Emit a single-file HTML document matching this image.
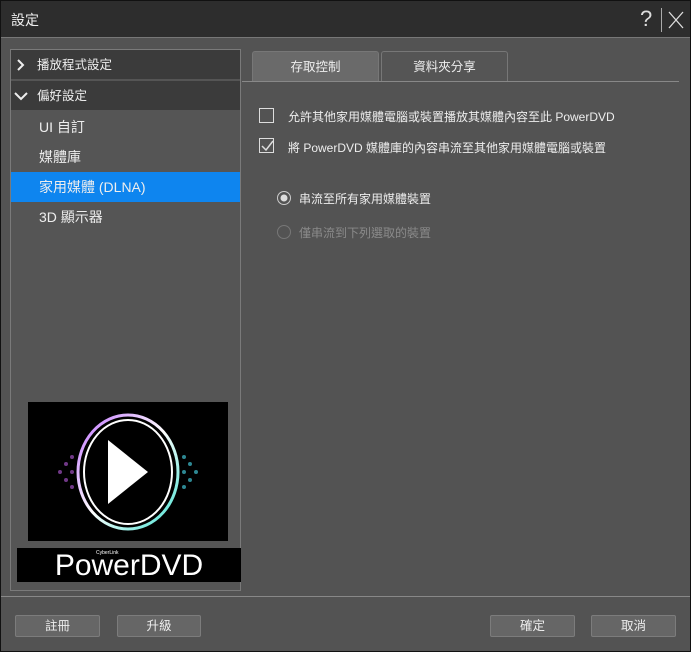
<!DOCTYPE html>
<html><head><meta charset="utf-8"><style>
*{margin:0;padding:0;box-sizing:border-box}
body{width:691px;height:652px;background:#535353;font-family:"Liberation Sans","Noto Sans CJK TC",sans-serif;color:#eee;font-size:13px;position:relative;overflow:hidden}
.abs{position:absolute}
#title{left:0;top:0;width:691px;height:38px;background:#2d2d2d;border-bottom:1px solid #777}
#left{left:10px;top:49px;width:231px;height:542px;border:1px solid #7a7a7a;background:#555}
.hdr{position:absolute;left:0;width:229px;height:30px;background:#3b3b3b;border-bottom:1px solid #555;line-height:30px;padding-left:26px;font-size:12.5px}
.item{position:absolute;left:0;width:229px;height:30px;line-height:30px;padding-left:28px;font-size:14px}
.tab{top:51px;height:31px;line-height:31px;text-align:center;font-size:12.5px;border:1px solid #777;border-bottom:none;border-radius:3px 3px 0 0}
.btn{top:615px;height:22px;line-height:21px;text-align:center;background:#666;border:1px solid #7c7c7c;border-radius:2px;font-size:12.5px}
.cb{width:15px;height:15px;border:1px solid #ddd}
</style></head><body>
<div id="title" class="abs"><span class="abs" style="left:11px;top:10px;font-size:14px">設定</span>
<span class="abs" style="left:640px;top:6px;font-size:22px;color:#ddd;font-weight:300">?</span>
<div class="abs" style="left:661px;top:8px;width:1px;height:24px;background:#aaa"></div>
<svg class="abs" style="left:668px;top:11px" width="16" height="18"><path d="M1 1L15 17M15 1L1 17" stroke="#ddd" stroke-width="1.3"/></svg></div>
<div id="left" class="abs">
<div class="hdr" style="top:0">播放程式設定</div>
<svg class="abs" style="left:5px;top:9px" width="10" height="12"><path d="M2 1L7 6L2 11" stroke="#eee" stroke-width="2" fill="none"/></svg>
<div class="hdr" style="top:31px">偏好設定</div>
<svg class="abs" style="left:3px;top:41px" width="14" height="10"><path d="M1 2L7 8L13 2" stroke="#eee" stroke-width="2" fill="none"/></svg>
<div class="item" style="top:62px">UI 自訂</div>
<div class="item" style="top:92px">媒體庫</div>
<div class="item" style="top:122px;background:#0e85ef">家用媒體 (DLNA)</div>
<div class="item" style="top:152px">3D 顯示器</div>
<div class="abs" style="left:17px;top:352px;width:200px;height:139px;background:#000">
<svg width="200" height="139"><defs><linearGradient id="g" x1="0" y1="0" x2="1" y2="1"><stop offset="0" stop-color="#c070ff"/><stop offset=".5" stop-color="#fff"/><stop offset="1" stop-color="#40e0d0"/></linearGradient></defs>
<g fill="#a050c0" opacity=".7"><circle cx="32" cy="70" r="2"/><circle cx="38" cy="62" r="2"/><circle cx="38" cy="78" r="2"/><circle cx="44" cy="55" r="2"/><circle cx="44" cy="70" r="2"/><circle cx="44" cy="85" r="2"/></g>
<g fill="#40c0d0" opacity=".7"><circle cx="168" cy="70" r="2"/><circle cx="162" cy="62" r="2"/><circle cx="162" cy="78" r="2"/><circle cx="156" cy="55" r="2"/><circle cx="156" cy="70" r="2"/><circle cx="156" cy="85" r="2"/></g>
<ellipse cx="100" cy="70" rx="50" ry="57" fill="none" stroke="url(#g)" stroke-width="3"/>
<ellipse cx="100" cy="70" rx="44" ry="52" fill="none" stroke="#fff" stroke-width="2"/>
<path d="M80 38L120 70L80 102Z" fill="#fff"/></svg></div>
<div class="abs" style="left:6px;top:498px;width:224px;height:34px;background:#000;color:#fff;font-size:30px;text-align:center;line-height:36px;font-weight:300">PowerDVD<span class="abs" style="left:79px;top:-13px;font-size:5px">CyberLink</span></div>
</div>
<div class="abs tab" style="left:252px;width:127px;background:#6a6a6a">存取控制</div>
<div class="abs tab" style="left:381px;width:127px;background:#555">資料夾分享</div>
<div class="abs" style="left:242px;top:81px;width:437px;height:1px;background:#888"></div>
<div class="abs cb" style="left:259px;top:108px"></div>
<span class="abs" style="left:288px;top:108px;font-size:12px">允許其他家用媒體電腦或裝置播放其媒體內容至此 PowerDVD</span>
<div class="abs cb" style="left:259px;top:138px"></div>
<svg class="abs" style="left:261px;top:139px" width="13" height="13"><path d="M1 7L5 11L12 2" stroke="#ddd" stroke-width="1.5" fill="none"/></svg>
<span class="abs" style="left:288px;top:139px;font-size:12px">將 PowerDVD 媒體庫的內容串流至其他家用媒體電腦或裝置</span>
<svg class="abs" style="left:276px;top:190px" width="16" height="16"><circle cx="8" cy="8" r="6.5" fill="none" stroke="#ccc"/><circle cx="8" cy="8" r="3.5" fill="#ddd"/></svg>
<span class="abs" style="left:299px;top:190px;font-size:12px">串流至所有家用媒體裝置</span>
<svg class="abs" style="left:276px;top:224px" width="16" height="16"><circle cx="8" cy="8" r="6.5" fill="none" stroke="#777"/></svg>
<span class="abs" style="left:299px;top:224px;font-size:12px;color:#8a8a8a">僅串流到下列選取的裝置</span>
<div class="abs" style="left:0;top:596px;width:691px;height:1px;background:#888"></div>
<div class="abs btn" style="left:15px;width:85px">註冊</div>
<div class="abs btn" style="left:117px;width:84px">升級</div>
<div class="abs btn" style="left:490px;width:85px">確定</div>
<div class="abs btn" style="left:591px;width:85px">取消</div>
<div class="abs" style="left:0;top:0;width:691px;height:652px;border:1px solid #111;pointer-events:none"></div>
</body></html>
